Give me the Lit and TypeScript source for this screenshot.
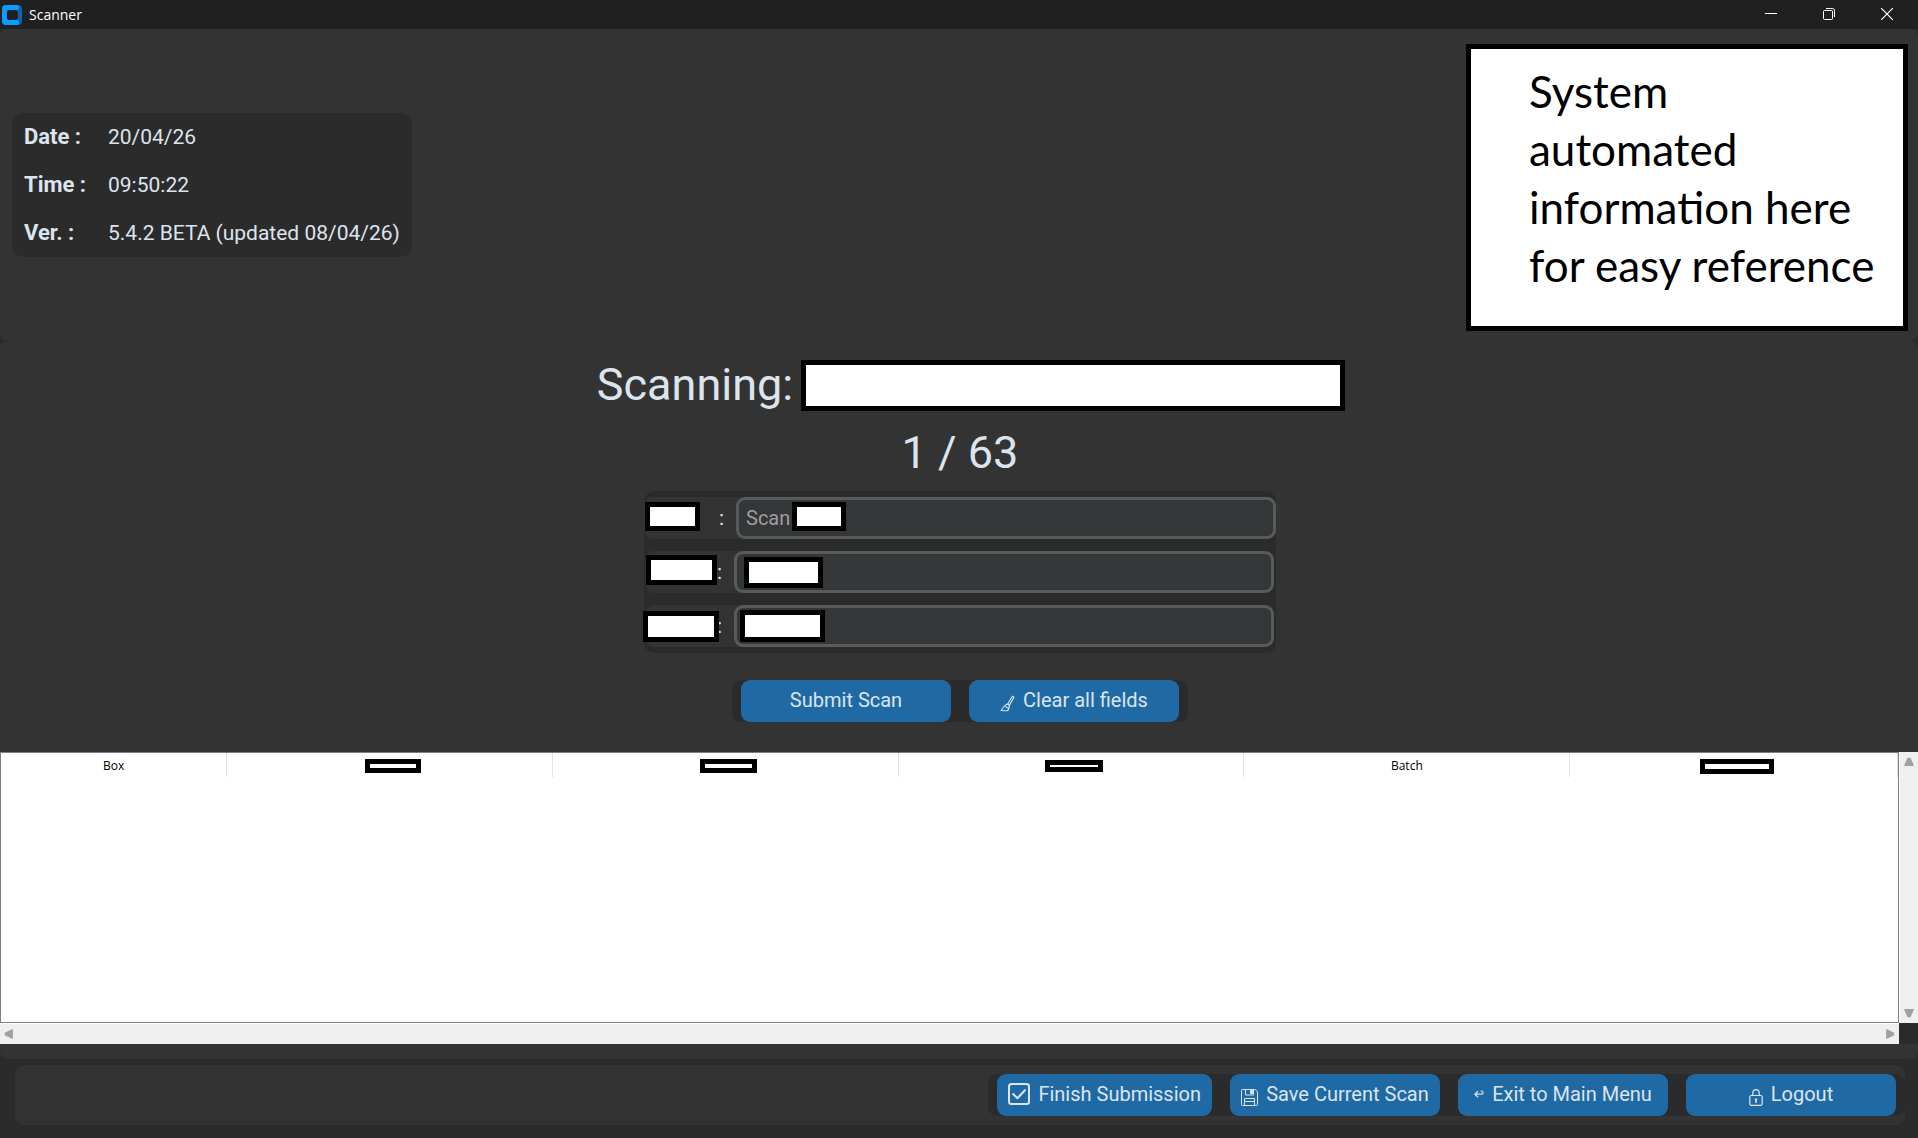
import { LitElement, html, css, svg, nothing } from "lit";
import { customElement, property } from "lit/decorators.js";

type Mask = { x: number; y: number; w: number; h: number };

const info = [
  { label: "Date :", value: "20/04/26" },
  { label: "Time :", value: "09:50:22" },
  { label: "Ver. :", value: "5.4.2 BETA (updated 08/04/26)" },
];

/* Mask positions are measured from the top left corner of their row. */
const fields: { id: string; hint: string; wide: boolean; masks: Mask[] }[] = [
  { id: "field-a", hint: "Scan", wide: true, masks: [{ x: 1, y: 5, w: 55, h: 29 }, { x: 148, y: 5, w: 54, h: 29 }] },
  { id: "field-b", hint: "", wide: false, masks: [{ x: 0, y: 4, w: 71, h: 30 }, { x: 98, y: 6, w: 79, h: 31 }] },
  { id: "field-c", hint: "", wide: false, masks: [{ x: -3, y: 6, w: 76, h: 31 }, { x: 94, y: 5, w: 85, h: 32 }] },
];

const columns: { text?: string; share: number; mask?: { w: number; h: number } }[] = [
  { text: "Box", share: 226 },
  { share: 326, mask: { w: 56, h: 14 } },
  { share: 346, mask: { w: 57, h: 14 } },
  { share: 346, mask: { w: 58, h: 12 } },
  { text: "Batch", share: 326 },
  { share: 328, mask: { w: 74, h: 15 } },
];
const shareTotal = columns.reduce((sum, c) => sum + c.share, 0);

const icons = {
  broom: svg`<svg class="low" width="15" height="17" viewBox="0 0 16 18" fill="none" stroke="currentColor" stroke-width="1.200" stroke-linecap="round" stroke-linejoin="round">
    <path d="M13.200 1.200 8.200 9.600 10 10.800 15 2.200Z"/><path d="M8.200 9.600C6 10 3.400 13 1.200 16.400c2.600.3 5.400.4 7.200 0 .8-1.600 1.700-3.800 1.600-5.600"/><path d="M6 12.400 9.200 14"/></svg>`,
  check: svg`<svg width="22" height="22" viewBox="0 0 22 22" fill="none" stroke="currentColor" stroke-width="2" stroke-linecap="round" stroke-linejoin="round">
    <rect x="1" y="1" width="20" height="20" rx="2.500"/><path d="M5.200 11 9.400 15.200 17 7.200"/></svg>`,
  disk: svg`<svg class="low" width="17" height="17" viewBox="0 0 17 17" fill="none" stroke="currentColor" stroke-width="1">
    <path d="M1.500.5h12.600l2.400 2.200v12.800a1 1 0 0 1-1 1h-14a1 1 0 0 1-1-1v-14a1 1 0 0 1 1-1Z"/><path d="M4.500.5v5.500h8V.5M3.500 16.500v-7h10v7M3.500 12.500h10"/><path d="M9.500 1.500h2v3h-2z" fill="currentColor"/></svg>`,
  back: svg`<svg width="10" height="8" viewBox="0 0 10 8" fill="none" stroke="currentColor" stroke-width="1.200">
    <path d="M6.500 1h1.200c2 .6 1.800 3.200 0 3.200H1.500M4 1.200.9 4.200 4 7.200"/></svg>`,
  lock: svg`<svg class="low" width="14" height="17" viewBox="0 0 14 17" fill="none" stroke="currentColor" stroke-width="1.200">
    <rect x=".8" y="6.500" width="12.400" height="9.800" rx="1.500"/><path d="M3.800 6.500V3.800a3.200 3.200 0 0 1 6.400 0v2.700"/><path d="M7 9.500v4.500M5.800 10.500h2.400" stroke-width="1.500"/></svg>`,
};

@customElement("scan-button")
class ScanButton extends LitElement {
  @property() label = "";
  @property() icon = "";

  static styles = css`
    :host { display: block; }
    .button {
      display: flex; align-items: center; justify-content: center; gap: 8px;
      min-width: 210px; height: 42px; padding: 0 11px 2px; border: 0; border-radius: 9px;
      background: #1f6aa5; color: #dce4ee; font: 20px/24px Roboto, sans-serif;
      white-space: nowrap; cursor: pointer;
    }
    .button:hover { background: #144870; }
    svg { flex: none; }
    .low { margin-top: 6px; }
  `;

  render() {
    const icon = icons[this.icon as keyof typeof icons];
    return html`<button class="button" type="button">${icon ?? nothing}<span>${this.label}</span></button>`;
  }
}

@customElement("title-bar")
class TitleBar extends LitElement {
  static styles = css`
    :host { display: block; }
    .bar { display: flex; align-items: center; height: 29px; padding: 0 2px; background: #202020; color: #fff; }
    .title { flex: 1; margin: 0; padding-left: 7px; font: 14px/20px "Open Sans", "Noto Sans", sans-serif; }
    .control { display: flex; align-items: center; justify-content: center; width: 58px; height: 29px; padding: 0 0 1px; border: 0; background: none; color: #fff; }
  `;

  render() {
    return html`<header class="bar">
      <svg width="20" height="20" viewBox="0 0 20 20" aria-hidden="true">
        <rect width="20" height="20" rx="4" fill="#0a64ae"/>
        <path d="M4 0h10a2.500 2.500 0 0 1 2 4.500V15.500a2.500 2.500 0 0 1-2 4.500H4a4 4 0 0 1-4-4V4a4 4 0 0 1 4-4Z" fill="#0d9aff"/>
        <rect x="5" y="5" width="11" height="10" rx="2" fill="#202020"/>
      </svg>
      <h1 class="title">Scanner</h1>
      <button class="control" type="button" aria-label="Minimize"><svg width="12" height="12" viewBox="0 0 12 12" stroke="currentColor"><path d="M0 5.500h12"/></svg></button>
      <button class="control" type="button" aria-label="Restore"><svg width="12" height="12" viewBox="0 0 12 12" fill="none" stroke="currentColor"><rect x=".5" y="2.500" width="9" height="9" rx="1"/><path d="M3 .5h6.500a2 2 0 0 1 2 2V9"/></svg></button>
      <button class="control" type="button" aria-label="Close"><svg width="12" height="12" viewBox="0 0 12 12" stroke="currentColor" stroke-width="1.200"><path d="M0 0 12 12M12 0 0 12"/></svg></button>
    </header>`;
  }
}

@customElement("results-table")
class ResultsTable extends LitElement {
  static styles = css`
    :host { display: flex; flex: 1; min-height: 200px; }
    .layout { display: grid; flex: 1; grid-template-columns: 1fr 19px; grid-template-rows: 1fr 21px; background: #2b2b2b; }
    .view { border: 1px solid #7c8085; background: #fff; overflow: hidden; }
    .table { width: 100%; border-collapse: collapse; table-layout: fixed; }
    .head { box-sizing: border-box; height: 24px; padding: 2px 0 0; border-right: 1px solid #e2e2e2; color: #000; font: 12px/16px "Open Sans", "Noto Sans", sans-serif; text-align: center; }
    .hidden { padding-left: 6px; }
    .mask { display: block; box-sizing: border-box; margin: 0 auto; border: 5px solid #000; background: #fff; }
    .track { display: flex; justify-content: space-between; background: #efefef; }
    .upright { flex-direction: column; border-left: 1px solid #fff; }
    .level { border-top: 1px solid #fff; }
    .arrow { display: flex; align-items: center; justify-content: center; width: 18px; height: 20px; padding: 0; border: 0; background: none; color: #a0a0a0; }
  `;

  private arrow(name: string, d: string) {
    return html`<button class="arrow" type="button" aria-label=${name}>
      <svg width="10" height="10" viewBox="0 0 9 9" fill="currentColor" stroke="currentColor" stroke-linejoin="round"><path d=${d}/></svg>
    </button>`;
  }

  render() {
    return html`<div class="layout">
      <div class="view">
        <table class="table">
          <colgroup>${columns.map((c) => html`<col style="width:${(c.share / shareTotal) * 100}%">`)}</colgroup>
          <thead><tr>${columns.map((c) => c.mask
            ? html`<th class="head hidden" scope="col"><span class="mask" style="width:${c.mask.w}px;height:${c.mask.h}px"></span></th>`
            : html`<th class="head" scope="col">${c.text}</th>`)}</tr></thead>
          <tbody></tbody>
        </table>
      </div>
      <div class="track upright">
        ${this.arrow("Scroll up", "M.7 7.500 3.500 1.200h2L8.300 7.500Z")}
        ${this.arrow("Scroll down", "M.7 1.500h7.600L5.500 7.800h-2Z")}
      </div>
      <div class="track level">
        ${this.arrow("Scroll left", "M7.500.7v7.600L1.200 5.500v-2Z")}
        ${this.arrow("Scroll right", "M1.500.7v7.600L7.800 5.500v-2Z")}
      </div>
    </div>`;
  }
}

@customElement("app-root")
class AppRoot extends LitElement {
  static styles = css`
    :host { display: block; }
    .app { display: flex; flex-direction: column; min-height: 100vh; background: #2b2b2b; color: #dce4ee; font: 21px/24px Roboto, sans-serif; }
    .top { display: flex; align-items: center; justify-content: space-between; min-height: 312px; padding: 0 10px 0 12px; box-sizing: border-box; border-radius: 8px; background: #333; }
    .info { display: grid; grid-template-columns: 84px auto; row-gap: 24px; margin: 0; padding: 12px; border-radius: 12px; background: #2b2b2b; }
    .name { font-size: 22px; font-weight: 700; }
    .value { margin: 0; white-space: nowrap; }
    .notice { box-sizing: border-box; width: 442px; margin: 4px 0 0; padding: 13px 16px 32px 58px; border: 5px solid #000; background: #fff; color: #000; font: 44px/58px Lato, "Open Sans", sans-serif; }
    .main { display: flex; flex: 1; flex-direction: column; padding-bottom: 15px; border-radius: 8px; background: #333; }
    .work { display: flex; flex-direction: column; align-items: center; padding: 18px 0 30px 2px; }
    .heading { display: flex; align-items: center; gap: 8px; margin: 0; padding-left: 22px; font: 45px/52px Roboto, sans-serif; }
    .blank { box-sizing: border-box; width: 544px; height: 51px; border: 5px solid #000; background: #fff; }
    .count { margin: 16px 0 12px; font: 45px/52px Roboto, sans-serif; }
    .form { display: grid; gap: 12px; width: 632px; padding: 6px 0; border-radius: 10px; background: #2b2b2b; }
    .row { position: relative; display: flex; margin: 0 2px; border-radius: 8px; background: #333; }
    .wide { margin: 0; }
    .label { flex: 1; padding: 9px 12px 0 0; text-align: right; }
    .entry { box-sizing: border-box; width: 540px; height: 42px; padding: 0 7px; border: 3px solid #565b5e; border-radius: 9px; outline: 0; background: #343638; color: #dce4ee; font: 20px/24px Roboto, sans-serif; }
    .entry::placeholder { color: #9e9e9e; opacity: 1; }
    .mask { position: absolute; box-sizing: border-box; border: 5px solid #000; background: #fff; pointer-events: none; }
    .actions { display: flex; gap: 18px; padding: 0 9px; border-radius: 9px; background: #2b2b2b; }
    .submit { margin-top: 27px; }
    .footer { padding: 6px 13px 13px 15px; }
    .strip { display: flex; justify-content: flex-end; padding: 9px 0; border-radius: 9px; background: #333; }
  `;

  render() {
    return html`<div class="app">
      <title-bar></title-bar>
      <section class="top">
        <dl class="info">${info.map((i) => html`<dt class="name">${i.label}</dt><dd class="value">${i.value}</dd>`)}</dl>
        <p class="notice">System<br>automated<br>information here<br>for easy reference</p>
      </section>
      <main class="main">
        <div class="work">
          <h2 class="heading">Scanning:<span class="blank"></span></h2>
          <div class="count">1 / 63</div>
          <form class="form">${fields.map((f) => html`<div class="row ${f.wide ? "wide" : ""}">
            <label class="label" for=${f.id}>:</label>
            <input class="entry" id=${f.id} type="text" placeholder=${f.hint}>
            ${f.masks.map((m) => html`<span class="mask" style="left:${m.x}px;top:${m.y}px;width:${m.w}px;height:${m.h}px"></span>`)}
          </div>`)}</form>
          <div class="actions submit">
            <scan-button label="Submit Scan"></scan-button>
            <scan-button label="Clear all fields" icon="broom"></scan-button>
          </div>
        </div>
        <results-table></results-table>
      </main>
      <footer class="footer">
        <div class="strip">
          <nav class="actions">
            <scan-button label="Finish Submission" icon="check"></scan-button>
            <scan-button label="Save Current Scan" icon="disk"></scan-button>
            <scan-button label="Exit to Main Menu" icon="back"></scan-button>
            <scan-button label="Logout" icon="lock"></scan-button>
          </nav>
        </div>
      </footer>
    </div>`;
  }
}
